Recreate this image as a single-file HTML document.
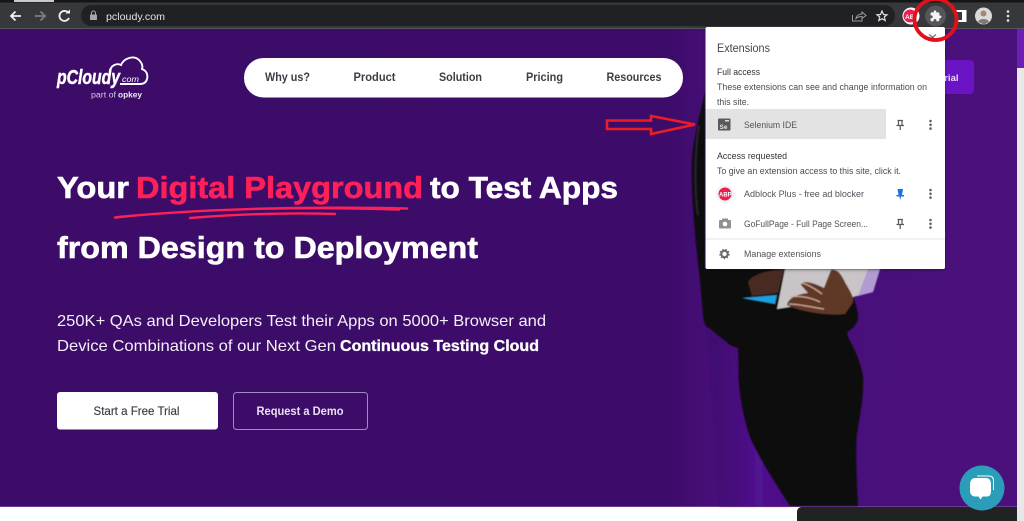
<!DOCTYPE html>
<html lang="en"><head><meta charset="utf-8"><title>pCloudy</title>
<style>
html,body{margin:0;padding:0;background:#fff;width:1024px;height:521px;overflow:hidden}
svg{display:block}
text{font-family:"Liberation Sans",sans-serif}
</style></head><body>
<svg width="1024" height="521" viewBox="0 0 1024 521" xmlns="http://www.w3.org/2000/svg">
<defs>
<linearGradient id="bg" x1="0" x2="1" y1="0" y2="0">
<stop offset="0" stop-color="#3c0c68"/><stop offset=".66" stop-color="#3d0c6a"/><stop offset=".7" stop-color="#470e78"/><stop offset="1" stop-color="#4a117d"/>
</linearGradient>
<linearGradient id="fold" x1="0" x2="1" y1="0" y2="0">
<stop offset="0" stop-color="#3f0c6e"/><stop offset=".35" stop-color="#470e7c"/><stop offset=".6" stop-color="#511290"/><stop offset="1" stop-color="#4a1084"/>
</linearGradient>
<filter id="b1"><feGaussianBlur stdDeviation=".4"/></filter>
<filter id="b2"><feGaussianBlur stdDeviation="1"/></filter>
<filter id="sh" x="-10%" y="-10%" width="120%" height="120%"><feDropShadow dx="0" dy="1" stdDeviation="1.5" flood-color="#000" flood-opacity=".35"/></filter>
</defs>

<!-- page background -->
<rect x="0" y="29" width="1017" height="477" fill="url(#bg)"/>
<rect x="0" y="506" width="1017" height="1" fill="#6a3a92"/>
<rect x="0" y="507" width="1024" height="14" fill="#fff"/>
<rect x="1017" y="29" width="7" height="39" fill="#6c1fb4"/>
<rect x="1017" y="68" width="7" height="453" fill="#e8e8ea"/>

<!-- person -->
<path d="M707 328 L732 345 L741 395 L752 440 L791 506 L720 506 C717 450 712 390 707 328Z" fill="url(#fold)" filter="url(#b2)"/>
<g filter="url(#b1)">
<path d="M705 92 C701 110 694 135 692 158 C691 190 694 230 700 280 L703 315 C704 324 706 328 709 328 L730 345 L738 348 C739 365 738 380 740 393 C742 410 746 425 750 437 C760 460 778 487 790 506 H858 C857 480 855 455 857 433 C860 415 864 395 863 377 C861 362 854 348 848 337 L847 332 C853 329 858 323 858 317 C858 310 855 303 853 296 L780 269 H705Z" fill="#0b090c"/>
<path d="M699 125 C695 150 694 190 698 215" stroke="#2a2430" stroke-width="2" fill="none"/>
<path d="M785 269 H880 L873 292 L853 297 L777 309 Z" fill="#c9c4c6"/>
<path d="M873 292 L880 269 L868 269 L858 296Z" fill="#b09bd2"/>
<path d="M742 298 L777 295 L775 304 Z" fill="#1f9fdc"/>
<path d="M748 282 C752 274 770 270 784 269 L778 293 L752 296Z" fill="#4a2c22"/>
<path d="M787 305 C788 298 798 294 808 293 L801 285 C802 280 812 282 824 288 L831 270 C838 268 842 276 846 284 C852 294 855 300 852 304 L845 314 C830 316 800 312 787 305Z" fill="#5f3828"/>
<path d="M802 283 C810 285 818 291 822 294 M790 297 C800 295 812 298 820 302 M789 304 C800 304 815 308 824 309" stroke="#cfa898" stroke-width="1.300" fill="none"/>
</g>

<!-- logo -->
<g>
<text x="57" y="84" font-size="20" font-weight="700" font-style="italic" fill="#fff" stroke="#fff" stroke-width=".5" textLength="63" lengthAdjust="spacingAndGlyphs">pCloudy</text>
<text x="122" y="82" font-size="8" font-style="italic" fill="#fff" textLength="17" lengthAdjust="spacingAndGlyphs">com</text>
<path d="M110 71 C111 65 117 63 121 65 C124 58 134 55 139 60 C142 63 143 66 142 69 C147 71 148 75 147 79 C146 83 143 84 140 84 L120 84" fill="none" stroke="#fff" stroke-width="1.900"/>
<text x="91" y="97.500" font-size="8" fill="#d5c8e2" textLength="25" lengthAdjust="spacingAndGlyphs">part of</text>
<text x="118" y="97.500" font-size="8" font-weight="700" fill="#efe9f5" textLength="24" lengthAdjust="spacingAndGlyphs">opkey</text>
</g>

<!-- nav -->
<rect x="244" y="58" width="439" height="39.500" rx="19.500" fill="#fff"/>
<g font-size="12" font-weight="700" fill="#403c46">
<text x="265" y="81" textLength="45" lengthAdjust="spacingAndGlyphs">Why us?</text>
<text x="353.500" y="81" textLength="42" lengthAdjust="spacingAndGlyphs">Product</text>
<text x="439" y="81" textLength="43" lengthAdjust="spacingAndGlyphs">Solution</text>
<text x="526" y="81" textLength="37" lengthAdjust="spacingAndGlyphs">Pricing</text>
<text x="606.500" y="81" textLength="55" lengthAdjust="spacingAndGlyphs">Resources</text>
</g>

<!-- right cta -->
<rect x="900" y="60" width="74" height="34" rx="4" fill="#6b14c6"/>
<text x="958.500" y="81" text-anchor="end" font-size="9.500" font-weight="700" fill="#e9defa">Trial</text>

<!-- headline -->
<g font-size="31" font-weight="700">
<text x="57" y="198" fill="#fff" stroke="#fff" stroke-width=".6" textLength="72" lengthAdjust="spacingAndGlyphs">Your</text>
<text x="136" y="198" fill="#ff1f59" stroke="#ff1f59" stroke-width=".6" textLength="287" lengthAdjust="spacingAndGlyphs">Digital Playground</text>
<text x="430" y="198" fill="#fff" stroke="#fff" stroke-width=".6" textLength="188" lengthAdjust="spacingAndGlyphs">to Test Apps</text>
<text x="57" y="258" fill="#fff" stroke="#fff" stroke-width=".6" textLength="421" lengthAdjust="spacingAndGlyphs">from Design to Deployment</text>
</g>
<path d="M115 217.500 C190 209.500 300 206 407 208.500" stroke="#ff1f59" stroke-width="2.500" fill="none" stroke-linecap="round"/>
<path d="M190 218 C240 214 290 212.500 335 214" stroke="#ff1f59" stroke-width="2.400" fill="none" stroke-linecap="round"/>
<path d="M270 209 C320 208 370 209 400 210" stroke="#ff1f59" stroke-width="1.600" fill="none"/>

<!-- paragraph -->
<text x="57" y="326" font-size="16" fill="#f4eff8" textLength="489" lengthAdjust="spacingAndGlyphs">250K+ QAs and Developers Test their Apps on 5000+ Browser and</text>
<text x="57" y="351" font-size="16" fill="#f4eff8" textLength="279" lengthAdjust="spacingAndGlyphs">Device Combinations of our Next Gen</text>
<text x="340" y="351" font-size="16" font-weight="700" fill="#fff" stroke="#fff" stroke-width=".3" textLength="199" lengthAdjust="spacingAndGlyphs">Continuous Testing Cloud</text>

<!-- buttons -->
<rect x="57" y="392" width="161" height="37.500" rx="3" fill="#fff"/>
<text x="93.500" y="415" font-size="12" fill="#3d3a42" stroke="#3d3a42" stroke-width=".15" textLength="86" lengthAdjust="spacingAndGlyphs">Start a Free Trial</text>
<rect x="233.500" y="392.500" width="134" height="37" rx="3" fill="none" stroke="#a488c2"/>
<text x="256.500" y="415" font-size="12" font-weight="700" fill="#eadff3" textLength="87" lengthAdjust="spacingAndGlyphs">Request a Demo</text>

<!-- bottom bar + chat -->
<path d="M797 521 V512 C797 509 799 507 802 507 H1017 V521Z" fill="#222222"/>
<circle cx="982" cy="488" r="22.500" fill="#2a9db8"/>
<path d="M975 478 C973 478 970 479.500 970 484 V491 C970 495 973 496.500 975 496.500 H978.500 L980.500 499.500 L982.500 496.500 H987 C990 496.500 991 494 991 491 V484 C991 480 989 478 986 478Z" fill="#fff"/>
<path d="M977 476 H989 C992 476 993.500 478 993.500 481 V490" fill="none" stroke="#fff" stroke-width="1"/>

<!-- arrow annotation -->
<path d="M607 120.500 H651 V116 L695 124.500 L651 134 V129 H607 Z" fill="none" stroke="#ed1c24" stroke-width="2.600"/>

<!-- chrome -->
<rect x="0" y="0" width="1024" height="29" fill="#37383b"/>
<rect x="0" y="0" width="1024" height="2.500" fill="#151516"/>
<rect x="14" y="0" width="40" height="2" fill="#c9c9cb"/>
<rect x="0" y="28" width="1024" height="1" fill="#55565a"/>
<rect x="81" y="5" width="814" height="21" rx="10.500" fill="#202124"/>
<g fill="none" stroke="#f0f0f0" stroke-width="1.800">
<path d="M21 16 H11 M15.500 11.500 L11 16 L15.500 20.500"/>
<path d="M35 16 H45 M40.500 11.500 L45 16 L40.500 20.500" stroke="#7d7e80"/>
<path d="M68.500 13 A5 5 0 1 0 69 18" />
</g>
<path d="M65.500 13.500 H70 V9.500Z" fill="#f0f0f0"/>
<rect x="90" y="14.500" width="7" height="5.500" rx=".8" fill="#a5a6a8"/>
<path d="M91.500 14.500 V13 A2 2 0 0 1 95.500 13 V14.500" fill="none" stroke="#a5a6a8" stroke-width="1"/>
<text x="106" y="20" font-size="10.500" fill="#dfe1e5" textLength="59" lengthAdjust="spacingAndGlyphs">pcloudy.com</text>

<path d="M852.500 15 V21 H862 V18" fill="none" stroke="#9a9b9e" stroke-width="1"/>
<path d="M856 18.500 C856.500 15.500 859 14 862 14 V12 L866 15.500 L862 18.500 V16.500 C860 16.500 857.500 17 856 18.500Z" fill="none" stroke="#9a9b9e" stroke-width="1"/>
<path d="M882 11 L883.500 14.500 L887 14.800 L884.300 17 L885.200 20.500 L882 18.700 L878.800 20.500 L879.700 17 L877 14.800 L880.500 14.500Z" fill="none" stroke="#e2e2e4" stroke-width="1.200"/>

<circle cx="911" cy="16" r="8.500" fill="#fff"/>
<circle cx="910" cy="16" r="6.500" fill="#ee1d4f"/>
<text x="905" y="19" font-size="6.500" font-weight="700" fill="#fff">AB</text>
<circle cx="935.500" cy="16" r="10.500" fill="#55565a"/>
<path transform="translate(929.500 9.800) scale(.52)" d="M20.500 11H19V7c0-1.100-.9-2-2-2h-4V3.500C13 2.120 11.880 1 10.500 1S8 2.120 8 3.500V5H4c-1.100 0-1.990.9-1.990 2v3.800H3.500c1.490 0 2.700 1.210 2.700 2.700s-1.210 2.700-2.700 2.700H2V20c0 1.100.9 2 2 2h3.800v-1.500c0-1.490 1.210-2.700 2.700-2.700 1.490 0 2.700 1.210 2.700 2.700V22H17c1.100 0 2-.9 2-2v-4h1.500c1.380 0 2.500-1.120 2.500-2.500S21.880 11 20.500 11z" fill="#f2f2f2"/>
<path d="M956 11 H965.500 V21 H956Z" fill="#37383b" stroke="#fff" stroke-width="2"/>
<rect x="962" y="10" width="3" height="12" fill="#fff"/>
<circle cx="983.500" cy="16" r="8.500" fill="#dcd9d6"/>
<circle cx="983.500" cy="13.500" r="3" fill="#a08878"/>
<path d="M978 22 C979 18 988 18 989 22 L984 24.500Z" fill="#7d7a78"/>
<g fill="#e8e8e8"><circle cx="1008" cy="11.500" r="1.300"/><circle cx="1008" cy="16" r="1.300"/><circle cx="1008" cy="20.500" r="1.300"/></g>

<!-- popup -->
<rect x="705.500" y="27" width="239.500" height="242" rx="2" fill="#fff" filter="url(#sh)"/>
<text x="717" y="52" font-size="11.500" fill="#43464a" textLength="53" lengthAdjust="spacingAndGlyphs">Extensions</text>
<path d="M929 34.500 L936 40 M936 34.500 L929 40" stroke="#70757a" stroke-width="1.300"/>
<text x="717" y="75" font-size="9" fill="#303236" textLength="43" lengthAdjust="spacingAndGlyphs">Full access</text>
<text x="717" y="90" font-size="9" fill="#484b52" textLength="210" lengthAdjust="spacingAndGlyphs">These extensions can see and change information on</text>
<text x="717" y="105" font-size="9" fill="#484b52" textLength="32" lengthAdjust="spacingAndGlyphs">this site.</text>
<rect x="705.500" y="109" width="180.500" height="30" fill="#e3e3e3"/>
<rect x="718" y="118.500" width="12.500" height="12" rx="1" fill="#59595b"/>
<rect x="725" y="120" width="4" height="1.500" fill="#ddd"/>
<text x="719.500" y="129" font-size="6.500" font-weight="700" fill="#e3e3e3">Se</text>
<text x="744" y="128" font-size="9" fill="#50535a" textLength="53" lengthAdjust="spacingAndGlyphs">Selenium IDE</text>

<path d="M897.500 120.500 H903 M898.500 120.500 V125.500 H902 V120.500 M896.500 125.500 H904 M900.200 126 V130" fill="none" stroke="#55585e" stroke-width="1.200"/>
<g fill="#5f6368">
<circle cx="930.500" cy="121" r="1.300"/><circle cx="930.500" cy="124.800" r="1.300"/><circle cx="930.500" cy="128.600" r="1.300"/>
<circle cx="930.500" cy="190" r="1.300"/><circle cx="930.500" cy="193.800" r="1.300"/><circle cx="930.500" cy="197.600" r="1.300"/>
<circle cx="930.500" cy="220" r="1.300"/><circle cx="930.500" cy="223.800" r="1.300"/><circle cx="930.500" cy="227.600" r="1.300"/>
</g>

<text x="717" y="159" font-size="9" fill="#303236" textLength="70" lengthAdjust="spacingAndGlyphs">Access requested</text>
<text x="717" y="174" font-size="9" fill="#484b52" textLength="184" lengthAdjust="spacingAndGlyphs">To give an extension access to this site, click it.</text>

<circle cx="725" cy="194" r="9" fill="#f2f2f2"/>
<circle cx="725" cy="194" r="6.500" fill="#ee1d4f"/>
<text x="719" y="196.500" font-size="6" font-weight="700" fill="#fff">ABP</text>
<text x="744" y="197" font-size="9" fill="#50535a" textLength="120" lengthAdjust="spacingAndGlyphs">Adblock Plus - free ad blocker</text>
<path d="M897.500 189 H903 L902 195 H904 V196.500 H901 L900.200 200 L899.400 196.500 H896.500 V195 H898.500Z" fill="#1a73e8"/>

<rect x="719" y="220" width="12" height="8.500" rx="1" fill="#8f9194"/>
<rect x="722" y="218.500" width="6" height="2" fill="#8f9194"/>
<circle cx="725" cy="224" r="2.300" fill="#fff"/>
<text x="744" y="227" font-size="9" fill="#50535a" textLength="124" lengthAdjust="spacingAndGlyphs">GoFullPage - Full Page Screen...</text>
<path d="M897.500 219.500 H903 M898.500 219.500 V224.500 H902 V219.500 M896.500 224.500 H904 M900.200 225 V229" fill="none" stroke="#55585e" stroke-width="1.200"/>

<rect x="705.500" y="238.500" width="239.500" height="1" fill="#e3e3e3"/>
<circle cx="724.500" cy="254" r="3.200" fill="none" stroke="#66696e" stroke-width="2"/>
<circle cx="724.500" cy="254" r="4.600" fill="none" stroke="#66696e" stroke-width="1.200" stroke-dasharray="1.600 1.600"/>
<text x="744" y="257" font-size="9" fill="#50535a" textLength="77" lengthAdjust="spacingAndGlyphs">Manage extensions</text>

<!-- red circle annotation -->
<ellipse cx="935.500" cy="19.500" rx="21" ry="20.500" fill="none" stroke="#e3101c" stroke-width="3.800"/>
</svg>
</body></html>
